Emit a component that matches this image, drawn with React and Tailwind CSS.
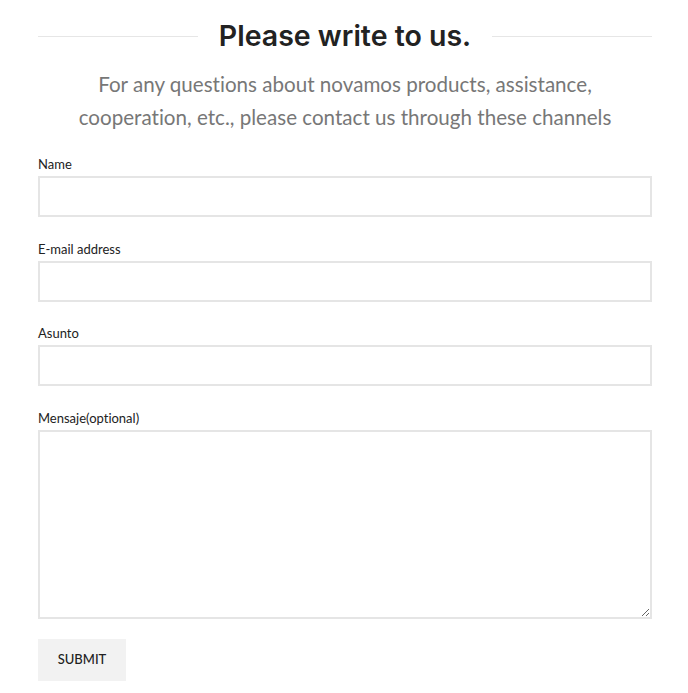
import { useState } from 'react';

const fields = [
  { label: 'Name', name: 'name' },
  { label: 'E-mail address', name: 'email' },
  { label: 'Asunto', name: 'subject' },
];

const App = () => {
  const [form, setForm] = useState({ name: '', email: '', subject: '', message: '' });

  const update = (key) => (e) => setForm({ ...form, [key]: e.target.value });

  return (
    <section className="min-h-[693px] bg-white font-['Lato',sans-serif] [font-variant-ligatures:none]">
      <div className="w-[614px] ml-[38px] pt-[18px]">
        <div className="flex items-center gap-[21px]">
          <div className="flex-1 h-px bg-[#e6e6e6]"></div>
          <h2 className="text-[28.5px] leading-[36px] font-semibold text-[#222] font-['Inter',sans-serif]">
            Please write to us.
          </h2>
          <div className="flex-1 h-px bg-[#e6e6e6]"></div>
        </div>
        <p className="mt-[14px] text-center text-[20.6px] leading-[33px] text-[#777]">
          For any questions about novamos products, assistance,
          <br />
          cooperation, etc., please contact us through these channels
        </p>

        <form className="mt-[20px]" onSubmit={(e) => e.preventDefault()}>
          {fields.map((f) => (
            <div key={f.name} className="mb-[21.5px]">
              <label className="block text-[13px] leading-[20px] text-[#222] mb-[2px]">{f.label}</label>
              <input
                value={form[f.name]}
                onChange={update(f.name)}
                className="block w-full h-[41px] border-2 border-[#e5e5e5] px-3 text-sm outline-none"
              />
            </div>
          ))}
          <div>
            <label className="block text-[13px] leading-[20px] text-[#222] mb-[2px]">Mensaje(optional)</label>
            <textarea
              value={form.message}
              onChange={update('message')}
              className="block w-full h-[189px] border-2 border-[#e5e5e5] px-3 py-2 text-sm outline-none"
            ></textarea>
          </div>
          <button
            type="submit"
            className="mt-[20px] w-[88px] h-[42px] bg-[#f2f2f2] text-[13px] font-medium text-[#222] uppercase"
          >
            Submit
          </button>
        </form>
      </div>
    </section>
  );
};

export default App;
